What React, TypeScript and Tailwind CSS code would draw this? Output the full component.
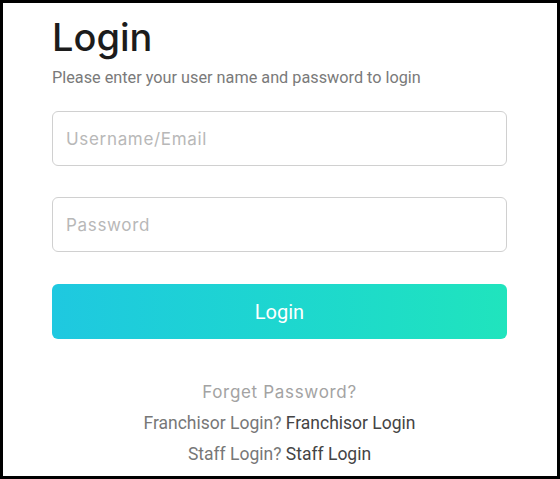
export default function App() {
  return (
    <div className="h-[479px] w-[560px] border-[3px] border-black bg-white">
      <div className="pl-[49px] pr-[50px] pt-[8px]">
        <h1 className="font-['Inter',sans-serif] text-[38px] font-medium leading-[52px] text-[#1c1c1c]">Login</h1>
        <p className="mt-[5px] font-['Roboto',sans-serif] text-[16.25px] leading-[20px] text-[#7a7a7a]">
          Please enter your user name and password to login
        </p>
        <form className="mt-[23px] flex flex-col" onSubmit={(e) => e.preventDefault()}>
          <input
            type="text"
            placeholder="Username/Email"
            className="h-[55px] w-full rounded-md border border-[#d0d0d0] px-[13px] font-['Inter',sans-serif] text-[17px] tracking-[0.04em] outline-none placeholder:text-[#b8b8b8]"
          />
          <input
            type="password"
            placeholder="Password"
            className="mt-[31px] h-[55px] w-full rounded-md border border-[#d0d0d0] px-[13px] font-['Inter',sans-serif] text-[17px] tracking-[0.04em] outline-none placeholder:text-[#b8b8b8]"
          />
          <button
            type="submit"
            className="mt-[32px] h-[55px] w-full rounded-md bg-linear-to-r from-[#1fc8e0] to-[#20e4bd] font-['Roboto',sans-serif] text-[20px] text-white"
          >
            Login
          </button>
        </form>
        <div className="mt-[42px] flex flex-col items-center gap-[8px] font-['Roboto',sans-serif] text-[17.5px] leading-[23px]">
          <a href="#" className="font-['Inter',sans-serif] text-[17px] tracking-[0.04em] text-[#a3a3a3]">Forget Password?</a>
          <p className="text-[#777]">
            Franchisor Login? <a href="#" className="text-[#444]">Franchisor Login</a>
          </p>
          <p className="text-[#777]">
            Staff Login? <a href="#" className="text-[#444]">Staff Login</a>
          </p>
        </div>
      </div>
    </div>
  );
}
